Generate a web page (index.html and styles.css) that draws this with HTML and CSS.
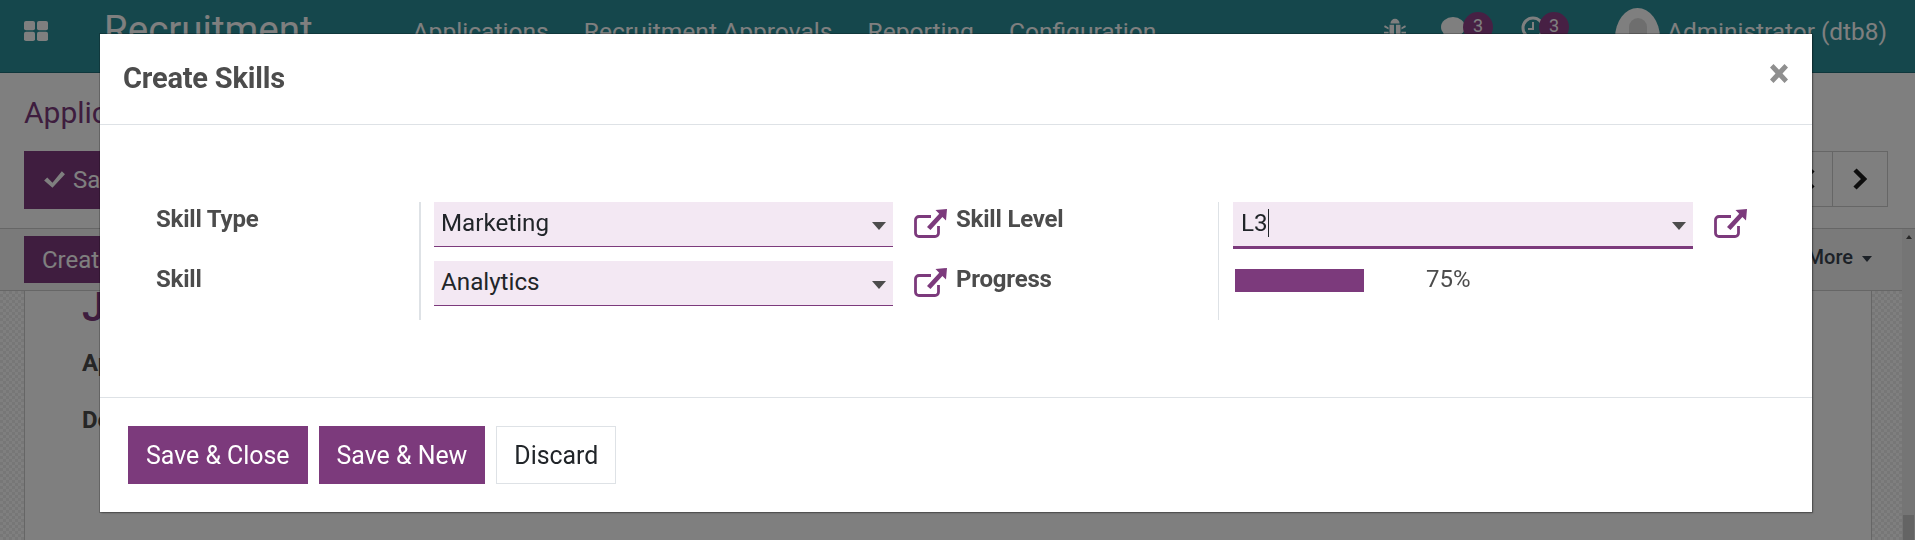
FILE: index.html
```html
<!DOCTYPE html>
<html lang="en">
<head>
  <meta charset="UTF-8">
  <title>Create Skills</title>
  <link rel="stylesheet" href="styles.css">
</head>
<body>
  <div class="app">
    <header class="navbar">
      <div class="nav-left">
        <svg class="apps-icon" viewBox="0 0 24 24" preserveAspectRatio="none"><rect x="0" y="0" width="11" height="11" rx="2"/><rect x="13" y="0" width="11" height="11" rx="2"/><rect x="0" y="13" width="11" height="11" rx="2"/><rect x="13" y="13" width="11" height="11" rx="2"/></svg>
        <span class="brand">Recruitment</span>
        <nav class="menu">
          <span>Applications</span>
          <span>Recruitment Approvals</span>
          <span>Reporting</span>
          <span>Configuration</span>
        </nav>
      </div>
      <div class="nav-right">
        <svg class="bug-icon" viewBox="0 0 24 24"><path d="M7 7a5 5 0 0 1 10 0zM6 8.500h5V23c-3 0-5-2-5-5zM13 8.500h5V18c0 3-2 5-5 5zM1 9l4 2.500v2L0 11zM23 9l-4 2.500v2l5-2.500zM0 16h5v2H0zM19 16h5v2h-5zM5 20l-3 3-1-1 3-3zM19 20l3 3 1-1-3-3z"/></svg>
        <div class="systray-item">
          <svg class="chat-icon" viewBox="0 0 24 24"><ellipse cx="12" cy="11" rx="12" ry="10"/><path d="M3 16l-2 6 7-3z"/></svg>
          <span class="badge">3</span>
        </div>
        <div class="systray-item">
          <svg class="clock-icon" viewBox="0 0 24 24"><circle cx="12" cy="12" r="10" fill="none" stroke="currentColor" stroke-width="3"/><path d="M11 6h2v8H7v-2h4z"/></svg>
          <span class="badge badge-near">3</span>
        </div>
        <div class="avatar"><div class="avatar-inner"></div></div>
        <span class="username">Administrator (dtb8)</span>
      </div>
    </header>

    <section class="control-panel">
      <div class="breadcrumb">Applications / New</div>
      <div class="cp-row">
        <button type="button" class="btn-dark btn-save">
          <svg class="check-icon" viewBox="0 0 24 24"><path d="M3 13l3-3 5 5L20 4l3 3-12 13z"/></svg>Save
        </button>
        <div class="pager">
          <span class="pager-btn pager-prev"><svg viewBox="0 0 14 22"><path d="M12 2L3 11l9 9" fill="none" stroke="currentColor" stroke-width="4.500"/></svg></span>
          <span class="pager-btn"><svg viewBox="0 0 14 22"><path d="M2 2l9 9-9 9" fill="none" stroke="currentColor" stroke-width="4.500"/></svg></span>
        </div>
      </div>
    </section>

    <div class="lower">
      <div class="lower-main">
        <section class="status-row">
          <button type="button" class="btn-dark btn-create">Create</button>
          <span class="more">More <i class="caret"></i></span>
        </section>
        <main class="content">
          <div class="sheet">
            <div class="sheet-title">Job</div>
            <div class="sheet-label">Applied</div>
            <div class="sheet-label">Department</div>
          </div>
        </main>
      </div>
      <div class="scrollbar">
        <i class="scroll-up"></i>
        <i class="scroll-thumb"></i>
      </div>
    </div>
  </div>

  <div class="backdrop"></div>

  <div class="modal">
    <div class="modal-header">
      <h4>Create Skills</h4>
      <svg class="close-icon" viewBox="0 0 18 19"><path d="M3.500 0L9 5.800 14.500 0 18 3.500 12.500 9.500 18 15.500 14.500 19 9 13.200 3.500 19 0 15.500 5.500 9.500 0 3.500z"/></svg>
    </div>
    <div class="modal-body">
      <div class="form-group">
        <div class="labels">
          <label>Skill Type</label>
          <label>Skill</label>
        </div>
        <div class="fields">
          <div class="field-row">
            <div class="field"><span>Marketing</span><i class="caret"></i></div>
            <svg class="ext-icon" viewBox="0 0 33 29"><path d="M17 7.500H5A3.500 3.500 0 0 0 1.500 11v13A3.500 3.500 0 0 0 5 27.500h16a3.500 3.500 0 0 0 3.500-3.500v-7" fill="none" stroke="currentColor" stroke-width="2.800"/><path d="M21.500 1L33 0l-1 11.500-3.600-3.600L16.500 21 13 18l12.200-13.300z"/></svg>
          </div>
          <div class="field-row">
            <div class="field"><span>Analytics</span><i class="caret"></i></div>
            <svg class="ext-icon" viewBox="0 0 33 29"><path d="M17 7.500H5A3.500 3.500 0 0 0 1.500 11v13A3.500 3.500 0 0 0 5 27.500h16a3.500 3.500 0 0 0 3.500-3.500v-7" fill="none" stroke="currentColor" stroke-width="2.800"/><path d="M21.500 1L33 0l-1 11.500-3.600-3.600L16.500 21 13 18l12.200-13.300z"/></svg>
          </div>
        </div>
      </div>
      <div class="form-group second">
        <div class="labels">
          <label>Skill Level</label>
          <label>Progress</label>
        </div>
        <div class="fields">
          <div class="field-row">
            <div class="field focused"><span class="typed">L3</span><i class="caret"></i></div>
            <svg class="ext-icon" viewBox="0 0 33 29"><path d="M17 7.500H5A3.500 3.500 0 0 0 1.500 11v13A3.500 3.500 0 0 0 5 27.500h16a3.500 3.500 0 0 0 3.500-3.500v-7" fill="none" stroke="currentColor" stroke-width="2.800"/><path d="M21.500 1L33 0l-1 11.500-3.600-3.600L16.500 21 13 18l12.200-13.300z"/></svg>
          </div>
          <div class="progress-row">
            <div class="progress-track"><div class="progress-bar"></div></div>
            <span class="progress-value">75%</span>
          </div>
        </div>
      </div>
    </div>
    <div class="modal-footer">
      <button type="button" class="btn btn-primary">Save &amp; Close</button>
      <button type="button" class="btn btn-primary">Save &amp; New</button>
      <button type="button" class="btn btn-secondary">Discard</button>
    </div>
  </div>
</body>
</html>
```

FILE: styles.css
```css
html, body {
  margin: 0;
  height: 100%;
  overflow: hidden;
}

body {
  font-family: Roboto, "Liberation Sans", sans-serif;
  font-size: 24px;
  color: #4c4c4c;
}

button {
  font-family: inherit;
  border: none;
}

/* page behind the dialog */
.app {
  height: 540px;
  display: flex;
  flex-direction: column;
  background: #fff;
}

.navbar {
  height: 72px;
  background: #2a8f99;
  border-bottom: 1px solid #1f6f78;
  display: flex;
  justify-content: space-between;
  color: #fff;
  flex-shrink: 0;
}

.nav-left, .nav-right {
  display: flex;
  align-items: flex-start;
}

.apps-icon {
  width: 24px;
  height: 20px;
  fill: #fff;
  margin: 21px 0 0 24px;
}

.brand {
  font-size: 38.5px;
  line-height: 42px;
  margin: 9px 0 0 56px;
}

.menu {
  display: flex;
  gap: 35px;
  font-size: 24.6px;
  line-height: 28px;
  margin: 18px 0 0 100px;
}

.nav-right {
  padding-right: 28px;
}

.bug-icon {
  width: 22px;
  height: 24px;
  fill: #fff;
  margin-top: 16px;
}

.systray-item {
  position: relative;
  width: 24px;
  margin-left: 35px;
}

.systray-item + .systray-item {
  margin-left: 56px;
}

.chat-icon, .clock-icon {
  width: 24px;
  height: 24px;
  fill: #fff;
  color: #fff;
  margin-top: 16px;
}

.badge {
  position: absolute;
  top: 12px;
  left: 22px;
  width: 30px;
  height: 30px;
  border-radius: 50%;
  background: #8f4088;
  font-size: 18px;
  line-height: 28px;
  text-align: center;
}

.badge-near {
  left: 18px;
}

.avatar {
  width: 45px;
  height: 60px;
  margin: 8px 0 0 70px;
  border-radius: 50%;
  background: #fff;
  display: flex;
  justify-content: center;
}

.avatar-inner {
  width: 18px;
  height: 50px;
  margin-top: 10px;
  border-radius: 9px;
  background: #ddd;
}

.username {
  margin: 14px 0 0 7px;
  font-size: 24.4px;
  line-height: 36px;
}

.control-panel {
  height: 155px;
  background: #fff;
  border-bottom: 1px solid #ccc;
  padding: 0 27px 0 24px;
  flex-shrink: 0;
}

.breadcrumb {
  font-size: 30px;
  line-height: 36px;
  color: #7c3a7c;
  margin-top: 22px;
}

.cp-row {
  display: flex;
  justify-content: space-between;
  margin-top: 20px;
}

.btn-dark {
  background: #7f3a7f;
  color: #fff;
  font-size: 24px;
  padding: 0 18px;
}

.btn-save {
  height: 58px;
  width: 200px;
  text-align: left;
  padding-left: 17px;
}

.check-icon {
  width: 25px;
  height: 25px;
  fill: #fff;
  margin-right: 7px;
  vertical-align: -4px;
}

.pager {
  display: flex;
  height: 56px;
}

.pager-btn {
  width: 54px;
  border: 1px solid #ccc;
  margin-left: -1px;
  display: flex;
  align-items: center;
  justify-content: center;
  color: #1c1c1c;
  background: #fff;
}

.pager-btn svg {
  width: 14px;
  height: 22px;
}

.pager-prev svg {
  margin-left: 6px;
}

.lower {
  flex: 1;
  display: flex;
  min-height: 0;
}

.lower-main {
  flex: 1;
  display: flex;
  flex-direction: column;
  min-width: 0;
}

.status-row {
  height: 62px;
  background: #f5f5f5;
  padding: 7px 0 0 24px;
  box-sizing: border-box;
  border-bottom: 1px solid #ccc;
  display: flex;
  justify-content: space-between;
  flex-shrink: 0;
}

.btn-create {
  height: 47px;
  width: 200px;
  text-align: left;
}

.more {
  font-size: 20px;
  font-weight: 500;
  line-height: 43px;
  margin-right: 30px;
  color: #39434f;
}

.caret {
  display: inline-block;
  border-left: 7px solid transparent;
  border-right: 7px solid transparent;
  border-top: 8px solid #4c4c4c;
}

.more .caret {
  border-left-width: 5.5px;
  border-right-width: 5.5px;
  border-top-width: 6px;
  border-top-color: #39434f;
  vertical-align: 2px;
  margin-left: 4px;
}

.content {
  flex: 1;
  display: flex;
  background: #fff;
  background-image: linear-gradient(45deg, #eee 25%, transparent 25%, transparent 75%, #eee 75%), linear-gradient(45deg, #eee 25%, transparent 25%, transparent 75%, #eee 75%);
  background-size: 6px 6px;
  background-position: 0 0, 3px 3px;
  min-height: 0;
}

.sheet {
  width: 1848px;
  margin-left: 24px;
  background: #fff;
  border-left: 1px solid #ccc;
  border-right: 1px solid #ccc;
  padding-left: 57px;
  box-sizing: border-box;
  flex-shrink: 0;
}

.sheet-title {
  font-size: 41px;
  font-weight: 500;
  line-height: 30px;
  color: #7c3a7c;
  margin: 1px 0 27px;
}

.sheet-label {
  font-weight: 700;
  font-size: 24px;
  line-height: 28px;
  color: #4c4c4c;
  margin-bottom: 29px;
}

.scrollbar {
  width: 13px;
  flex-shrink: 0;
  background: #ebebeb;
  display: flex;
  flex-direction: column;
  align-items: center;
}

.scroll-up {
  margin-top: 6px;
  border-left: 3.5px solid transparent;
  border-right: 3.5px solid transparent;
  border-bottom: 4px solid #505050;
}

.scroll-thumb {
  margin-top: auto;
  width: 11px;
  height: 25px;
  background: #c8c8c8;
}

/* dialog */
.backdrop {
  position: fixed;
  inset: 0;
  background: rgba(0, 0, 0, 0.5);
}

.modal {
  position: fixed;
  top: 34px;
  left: 100px;
  width: 1712px;
  height: 478px;
  background: #fff;
  box-shadow: 0 0 0 1px rgba(0, 0, 0, 0.2), 1px 1px 2px rgba(0, 0, 0, 0.3);
  display: flex;
  flex-direction: column;
}

.modal-header {
  height: 90px;
  border-bottom: 1px solid #dee2e6;
  padding: 0 24px 0 23px;
  display: flex;
  align-items: center;
  justify-content: space-between;
  flex-shrink: 0;
}

.modal-header h4 {
  margin: 0 0 2px;
  font-size: 29px;
  font-weight: 700;
  color: #4c4c4c;
  line-height: 34px;
  letter-spacing: -0.2px;
}

.close-icon {
  width: 18px;
  height: 19px;
  fill: #8f8f8f;
  margin-bottom: 11px;
}

.modal-body {
  height: 272px;
  padding: 77px 0 0 56px;
  box-sizing: border-box;
  display: flex;
  flex-shrink: 0;
}

.form-group {
  display: flex;
  width: 800px;
}

.form-group.second {
  width: auto;
}

.labels {
  width: 263px;
  display: flex;
  flex-direction: column;
  gap: 32px;
  padding-top: 3px;
  flex-shrink: 0;
}

.labels label {
  font-weight: 700;
  font-size: 24px;
  line-height: 28px;
  height: 28px;
  letter-spacing: -0.2px;
}

.form-group.second .labels {
  width: 262px;
}

.fields {
  border-left: 2px solid #dee2e6;
  padding-left: 13px;
  height: 118px;
  display: flex;
  flex-direction: column;
  gap: 14px;
}

.form-group.second .fields {
  border-left-width: 1px;
  padding-left: 14px;
}

.field-row {
  display: flex;
  align-items: flex-start;
}

.field {
  width: 459px;
  height: 45px;
  box-sizing: border-box;
  background: #f3e8f3;
  border-bottom: 1px solid #7c3a7c;
  display: flex;
  align-items: center;
  justify-content: space-between;
  padding: 0 7px 2px 7px;
  font-size: 24.2px;
  color: #212529;
  flex-shrink: 0;
}

.field .caret {
  margin-top: 6px;
}

.field.focused {
  width: 460px;
  height: 47px;
  border-bottom: 3px solid #7c3a7c;
  padding-left: 8px;
}

.typed {
  border-right: 1px solid #212529;
  line-height: 28px;
}

.ext-icon {
  width: 33px;
  height: 29px;
  fill: currentColor;
  color: #7c3a7c;
  margin: 7px 0 0 21px;
  flex-shrink: 0;
}

.progress-row {
  display: flex;
  align-items: center;
  padding-left: 2px;
  height: 35px;
}

.progress-track {
  width: 129px;
  height: 23px;
}

.progress-bar {
  width: 100%;
  height: 100%;
  background: #7c3a7c;
}

.progress-value {
  margin: 0 0 3px 62px;
  font-size: 24px;
  color: #4c4c4c;
}

.modal-footer {
  flex: 1;
  border-top: 1px solid #dee2e6;
  padding: 28px 0 0 28px;
  display: flex;
  gap: 11px;
  align-items: flex-start;
}

.btn {
  height: 58px;
  font-size: 24.9px;
  padding: 0 18px;
}

.btn-primary {
  background: #7c3a7c;
  color: #fff;
}

.btn-secondary {
  background: #fff;
  color: #212529;
  border: 1px solid #dee2e6;
  padding: 0 17px;
}
```
